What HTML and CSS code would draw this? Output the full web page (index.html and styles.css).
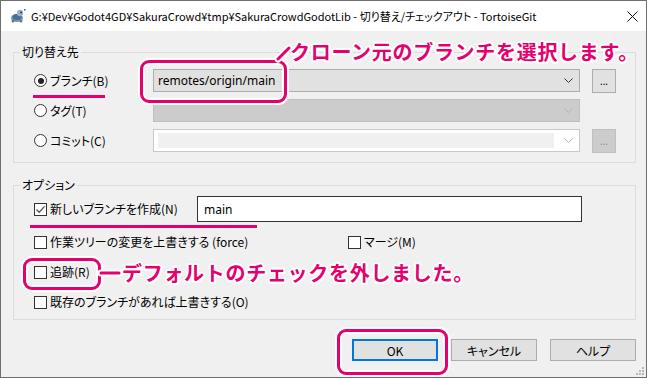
FILE: index.html
```html
<!doctype html>
<html lang="ja">
  <head>
    <meta charset="UTF-8" />
    <title>切り替え/チェックアウト - TortoiseGit</title>
    <link rel="stylesheet" href="styles.css">
  </head>
  <body>
    <div class="window">
      <div class="titlebar">
        <svg class="app-icon" width="16" height="16" viewBox="0 0 16 16">
          <ellipse cx="7" cy="10" rx="6" ry="4" fill="#7f93ab" />
          <ellipse cx="7" cy="9" rx="4.5" ry="3" fill="#4d6d96" />
          <circle cx="10" cy="5" r="3.2" fill="#9fb3c8" />
          <circle cx="11" cy="4.5" r="1" fill="#2b3f5a" />
          <circle cx="3" cy="13" r="1.5" fill="#5f7899" />
          <circle cx="11" cy="13" r="1.5" fill="#5f7899" />
          <rect x="14" y="1" width="1.5" height="1.5" fill="#3a5a86" />
        </svg>
        <span class="title">G:¥Dev¥Godot4GD¥SakuraCrowd¥tmp¥SakuraCrowdGodotLib - 切り替え/チェックアウト - TortoiseGit</span>
        <svg class="close" width="11" height="11" viewBox="0 0 11 11">
          <path d="M0.5 0.5 L10.5 10.5 M10.5 0.5 L0.5 10.5" stroke="#111" stroke-width="1" fill="none" />
        </svg>
      </div>

      <div class="dialog">
        <fieldset class="group group-target">
          <legend>切り替え先</legend>
          <div class="target-grid">
            <label class="radio"><span class="radio-mark checked"></span>ブランチ(B)</label>
            <div class="combo">
              <span class="combo-text">remotes/origin/main</span>
              <svg class="chevron" width="9" height="5" viewBox="0 0 9 5"><path d="M0.5 0.5 L4.5 4.5 L8.5 0.5" stroke="#333" fill="none" /></svg>
            </div>
            <button class="more">...</button>

            <label class="radio"><span class="radio-mark"></span>タグ(T)</label>
            <div class="combo combo-disabled">
              <span class="combo-text"></span>
              <svg class="chevron" width="9" height="5" viewBox="0 0 9 5"><path d="M0.5 0.5 L4.5 4.5 L8.5 0.5" stroke="#b5b5b5" fill="none" /></svg>
            </div>
            <span></span>

            <label class="radio"><span class="radio-mark"></span>コミット(C)</label>
            <div class="combo combo-edit">
              <span class="combo-field"></span>
              <svg class="chevron" width="9" height="5" viewBox="0 0 9 5"><path d="M0.5 0.5 L4.5 4.5 L8.5 0.5" stroke="#b5b5b5" fill="none" /></svg>
            </div>
            <button class="more more-disabled">...</button>
          </div>
        </fieldset>

        <fieldset class="group group-options">
          <legend>オプション</legend>
          <div class="option-row option-first">
            <label class="check"><span class="check-mark checked">
              <svg width="11" height="11" viewBox="0 0 11 11"><path d="M1.5 5.5 L4.2 8.3 L9.6 2.4" stroke="#555" stroke-width="1.3" fill="none" /></svg>
            </span>新しいブランチを作成(N)</label>
            <input class="text-input" type="text" value="main" />
          </div>
          <div class="option-row">
            <label class="check check-wide"><span class="check-mark"></span>作業ツリーの変更を上書きする (force)</label>
            <label class="check"><span class="check-mark"></span>マージ(M)</label>
          </div>
          <div class="option-row">
            <label class="check"><span class="check-mark"></span>追跡(R)</label>
          </div>
          <div class="option-row">
            <label class="check"><span class="check-mark"></span>既存のブランチがあれば上書きする(O)</label>
          </div>
        </fieldset>

        <div class="buttons">
          <button class="btn btn-default">OK</button>
          <button class="btn">キャンセル</button>
          <button class="btn">ヘルプ</button>
        </div>
      </div>

      <svg class="grip" width="8" height="8" viewBox="0 0 8 8">
        <rect x="6" y="0" width="2" height="2" fill="#b8b8b8" />
        <rect x="3" y="3" width="2" height="2" fill="#b8b8b8" />
        <rect x="6" y="3" width="2" height="2" fill="#b8b8b8" />
        <rect x="0" y="6" width="2" height="2" fill="#b8b8b8" />
        <rect x="3" y="6" width="2" height="2" fill="#b8b8b8" />
        <rect x="6" y="6" width="2" height="2" fill="#b8b8b8" />
      </svg>

      <!-- annotations -->
      <div class="mark mark-branch"></div>
      <div class="mark mark-track"></div>
      <div class="mark mark-ok"></div>
      <div class="underline underline-branch"></div>
      <div class="underline underline-new"></div>
      <svg class="leader" width="648" height="379" viewBox="0 0 648 379">
        <g stroke="#fff" stroke-width="7" stroke-linecap="round" fill="none">
          <path d="M278 59 L289 48" />
          <path d="M101 273 L119 273" />
        </g>
        <g stroke="#e6006f" stroke-width="3" stroke-linecap="round" fill="none">
          <path d="M278 59 L289 48" />
          <path d="M101 273 L119 273" />
        </g>
      </svg>
      <div class="note note-branch">クローン元のブランチを選択します。</div>
      <div class="note note-track">デフォルトのチェックを外しました。</div>
    </div>
  </body>
</html>
```

FILE: styles.css
```css
body {
  margin: 0;
  background: #fff;
  font-family: "Noto Sans CJK JP", sans-serif;
  font-size: 12px;
  color: #000;
}
.window {
  position: relative;
  width: 647px;
  height: 378px;
  box-sizing: border-box;
  border: 1px solid #6f6f6f;
  background: #f0f0f0;
  overflow: hidden;
}
.titlebar {
  height: 30px;
  background: #fff;
  display: flex;
  align-items: center;
  padding-left: 9px;
}
.app-icon {
  flex: none;
}
.title {
  margin-left: 5px;
  font-size: 11px;
  font-feature-settings: "palt";
  white-space: nowrap;
}
.close {
  margin-left: auto;
  margin-right: 8px;
}
.dialog {
  padding: 13px 10px 0 12px;
}
.group {
  margin: 0;
  border: 1px solid #dcdcdc;
  padding: 9px 18px 10px 20px;
  min-width: 0;
}
.group legend {
  padding: 0 2px;
  margin-left: -14px;
  line-height: 16px;
  font-feature-settings: "palt";
}
.target-grid {
  display: grid;
  grid-template-columns: 119px 427px 24px;
  grid-auto-rows: 23px;
  row-gap: 7px;
  column-gap: 0;
  align-items: center;
}
.radio,
.check {
  display: flex;
  align-items: center;
  gap: 3px;
  font-feature-settings: "palt";
  white-space: nowrap;
  line-height: 18px;
}
.radio-mark {
  width: 11px;
  height: 11px;
  border: 1px solid #333;
  border-radius: 50%;
  background: #fff;
  display: flex;
  align-items: center;
  justify-content: center;
  flex: none;
}
.radio-mark.checked::after {
  content: "";
  width: 6px;
  height: 6px;
  border-radius: 50%;
  background: #222;
}
.check-mark {
  width: 11px;
  height: 11px;
  border: 1px solid #333;
  background: #fff;
  flex: none;
  display: flex;
}
.combo {
  height: 23px;
  box-sizing: border-box;
  border: 1px solid #adadad;
  background: #e1e1e1;
  display: flex;
  align-items: center;
  padding: 0 6px 0 4px;
}
.combo-text {
  flex: 1;
  font-family: "Noto Sans", "Noto Sans CJK JP", sans-serif;
  font-size: 12px;
}
.combo-disabled {
  background: #cccccc;
  border-color: #bfbfbf;
}
.combo-edit {
  background: #fff;
  border-color: #c8c8c8;
}
.combo-field {
  flex: 1;
  height: 15px;
  background: #f0f0f0;
  margin-right: 10px;
}
.more {
  margin-left: 12px;
  width: 24px;
  height: 24px;
  padding: 0;
  border: 1px solid #adadad;
  background: #e1e1e1;
  font-family: "Noto Sans", sans-serif;
  font-size: 10px;
  line-height: 10px;
  color: #000;
}
.more-disabled {
  background: #cccccc;
  border-color: #bfbfbf;
  color: #8c8c8c;
}
.group-options {
  margin-top: 14px;
  padding: 3px 18px 7px 20px;
}
.option-row {
  display: flex;
  align-items: center;
  height: 20px;
  margin-top: 10px;
}
.option-first {
  height: 26px;
  margin-top: 0;
  margin-bottom: 2px;
}
.option-first .check {
  width: 163px;
}
.check-wide {
  width: 314px;
}
.text-input {
  width: 385px;
  height: 26px;
  box-sizing: border-box;
  border: 1px solid #333;
  background: #fff;
  padding: 0 6px;
  font-family: "Noto Sans", sans-serif;
  font-size: 12px;
  color: #000;
}
.buttons {
  display: flex;
  justify-content: flex-end;
  gap: 13px;
  margin-top: 19px;
}
.btn {
  width: 86px;
  height: 22px;
  box-sizing: border-box;
  border: 1px solid #adadad;
  background: #e1e1e1;
  font-family: "Noto Sans CJK JP", sans-serif;
  font-size: 12px;
  font-feature-settings: "palt";
  padding: 0;
  color: #000;
}
.btn-default {
  border: 2px solid #0078d7;
}
.grip {
  position: absolute;
  right: 2px;
  bottom: 2px;
}

/* annotations */
.mark {
  position: absolute;
  box-sizing: border-box;
  border: 3px solid #e6006f;
  border-radius: 9px;
  box-shadow: 0 0 0 2px #fff, inset 0 0 0 2px #fff;
}
.mark-branch {
  left: 139px;
  top: 59px;
  width: 147px;
  height: 43px;
}
.mark-track {
  left: 22px;
  top: 257px;
  width: 78px;
  height: 32px;
}
.mark-ok {
  left: 336px;
  top: 328px;
  width: 111px;
  height: 46px;
}
.underline {
  position: absolute;
  height: 3px;
  background: #e6006f;
}
.underline-branch {
  left: 32px;
  top: 94px;
  width: 72px;
}
.underline-new {
  left: 29px;
  top: 224px;
  width: 227px;
}
.leader {
  position: absolute;
  left: -1px;
  top: -1px;
}
.note {
  position: absolute;
  font-family: "Noto Sans CJK JP", sans-serif;
  font-weight: bold;
  font-size: 20px;
  line-height: 24px;
  letter-spacing: 0.7px;
  color: #e6006f;
  white-space: nowrap;
  text-shadow:
    2px 0 0 #fff, -2px 0 0 #fff, 0 2px 0 #fff, 0 -2px 0 #fff,
    1.5px 1.5px 0 #fff, -1.5px 1.5px 0 #fff, 1.5px -1.5px 0 #fff, -1.5px -1.5px 0 #fff;
}
.note-branch {
  left: 289px;
  top: 39px;
}
.note-track {
  left: 121px;
  top: 260px;
}
```
